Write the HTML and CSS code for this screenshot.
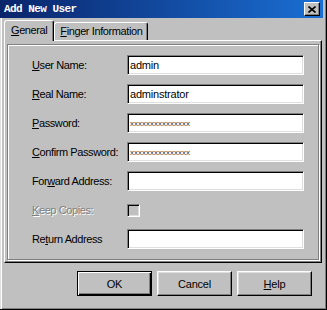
FILE: index.html
```html
<!DOCTYPE html>
<html lang="en">
<head>
  <meta charset="UTF-8" />
  <title>Add New User</title>
  <link rel="stylesheet" href="styles.css">
</head>
<body>
  <div class="window">
    <div class="titlebar">
      <span class="title">Add New User</span>
      <button class="close" title="Close">
        <svg width="8" height="7" viewBox="0 0 8 7"><path d="M0.5 0.5L7.5 6.5M7.5 0.5L0.5 6.5" stroke="#000" stroke-width="1.6" fill="none"/></svg>
      </button>
    </div>

    <div class="tabs">
      <div class="tab active"><u>G</u>eneral</div>
      <div class="tab"><u>F</u>inger Information</div>
    </div>

    <div class="panel">
      <div class="group">
        <label><u>U</u>ser Name:</label>
        <input class="field" type="text" value="admin" spellcheck="false">

        <label><u>R</u>eal Name:</label>
        <input class="field" type="text" value="adminstrator" spellcheck="false">

        <label><u>P</u>assword:</label>
        <input class="field masked" type="text" value="xxxxxxxxxxxxxxx" spellcheck="false">

        <label><u>C</u>onfirm Password:</label>
        <input class="field masked" type="text" value="xxxxxxxxxxxxxxx" spellcheck="false">

        <label>For<u>w</u>ard Address:</label>
        <input class="field" type="text" value="" spellcheck="false">

        <label class="disabled"><u>K</u>eep Copies:</label>
        <span class="check"></span>

        <label>Re<u>t</u>urn Address</label>
        <input class="field" type="text" value="" spellcheck="false">
      </div>
    </div>

    <div class="buttons">
      <button class="btn default">OK</button>
      <button class="btn">Cancel</button>
      <button class="btn"><u>H</u>elp</button>
    </div>
  </div>
</body>
</html>
```

FILE: styles.css
```css
body {
  margin: 0;
  padding: 0;
  font-family: "Liberation Sans", Arial, sans-serif;
  font-size: 11px;
  letter-spacing: -0.4px;
  overflow: hidden;
}
.window {
  width: 327px;
  height: 310px;
  box-sizing: border-box;
  background: #c0c0c0;
  border-right: 1px solid #000;
  border-bottom: 1px solid #000;
  box-shadow: inset 1px 0 #dfdfdf, inset 2px 0 #fff, inset -1px -1px #808080;
}
.titlebar {
  height: 18px;
  margin-right: 3px;
  display: flex;
  align-items: center;
  justify-content: space-between;
  padding: 0 3px 0 4px;
  background: linear-gradient(to right, #0a246a, #1a6fd4);
  color: #fff;
}
.title {
  font-family: "Liberation Mono", "DejaVu Sans Mono", monospace;
  font-weight: bold;
  font-size: 11px;
  letter-spacing: -0.55px;
}
.close {
  width: 16px;
  height: 14px;
  padding: 0;
  display: flex;
  align-items: center;
  justify-content: center;
  background: #c0c0c0;
  border: 1px solid;
  border-color: #fff #000 #000 #fff;
  box-shadow: inset -1px -1px #808080;
}
.tabs {
  display: flex;
  align-items: flex-end;
  height: 20px;
  margin-top: 2px;
  padding-left: 4px;
}
.tab {
  height: 18px;
  box-sizing: border-box;
  padding: 2px 5px 0 5px;
  border: 1px solid;
  border-bottom: none;
  border-color: #fff #000 transparent #fff;
  border-radius: 3px 3px 0 0;
  box-shadow: inset -1px 0 #808080;
  background: #c0c0c0;
}
.tab.active {
  position: relative;
  z-index: 1;
  height: 21px;
  margin-bottom: -1px;
  padding: 3px 6px 0 6px;
}
.panel {
  width: 318px;
  height: 223px;
  box-sizing: border-box;
  margin-left: 4px;
  padding: 3px 2px 2px 2px;
  border: 1px solid;
  border-color: #fff #000 #000 #fff;
  box-shadow: inset -1px -1px #808080;
}
.group {
  height: 100%;
  box-sizing: border-box;
  display: grid;
  grid-template-columns: 95px 177px;
  grid-auto-rows: 20px;
  row-gap: 9px;
  align-items: center;
  align-content: start;
  padding: 10px 0 0 24px;
  border: 1px solid #808080;
  box-shadow: inset 1px 1px #fff, 1px 1px #fff;
}
label {
  color: #000;
  white-space: nowrap;
}
label.disabled {
  color: #808080;
  text-shadow: 1px 1px #fff;
}
.field {
  width: 177px;
  height: 20px;
  box-sizing: border-box;
  margin: 0;
  padding: 0 2px;
  font-family: "Liberation Sans", Arial, sans-serif;
  font-size: 11px;
  letter-spacing: -0.2px;
  color: #000;
  background: #fff;
  border: 1px solid;
  border-color: #808080 #fff #fff #808080;
  box-shadow: inset 1px 1px #000, inset -1px -1px #dfdfdf;
  outline: none;
}
.field.masked {
  font-size: 8px;
  letter-spacing: 0;
  color: #333;
}
.check {
  width: 13px;
  height: 13px;
  box-sizing: border-box;
  background: #c0c0c0;
  border: 1px solid;
  border-color: #808080 #fff #fff #808080;
  box-shadow: inset 1px 1px #000, inset -1px -1px #dfdfdf;
}
.buttons {
  display: flex;
  justify-content: flex-end;
  gap: 5px;
  margin: 8px 14px 0 0;
}
.btn {
  width: 75px;
  height: 25px;
  box-sizing: border-box;
  padding: 0;
  font-family: "Liberation Sans", Arial, sans-serif;
  font-size: 11px;
  letter-spacing: -0.2px;
  color: #000;
  background: #c0c0c0;
  border: 1px solid;
  border-color: #fff #000 #000 #fff;
  box-shadow: inset -1px -1px #808080, inset 1px 1px #dfdfdf;
}
.btn.default {
  border-color: #000;
  box-shadow: inset 1px 1px #fff, inset -1px -1px #000, inset -2px -2px #808080;
}
```
